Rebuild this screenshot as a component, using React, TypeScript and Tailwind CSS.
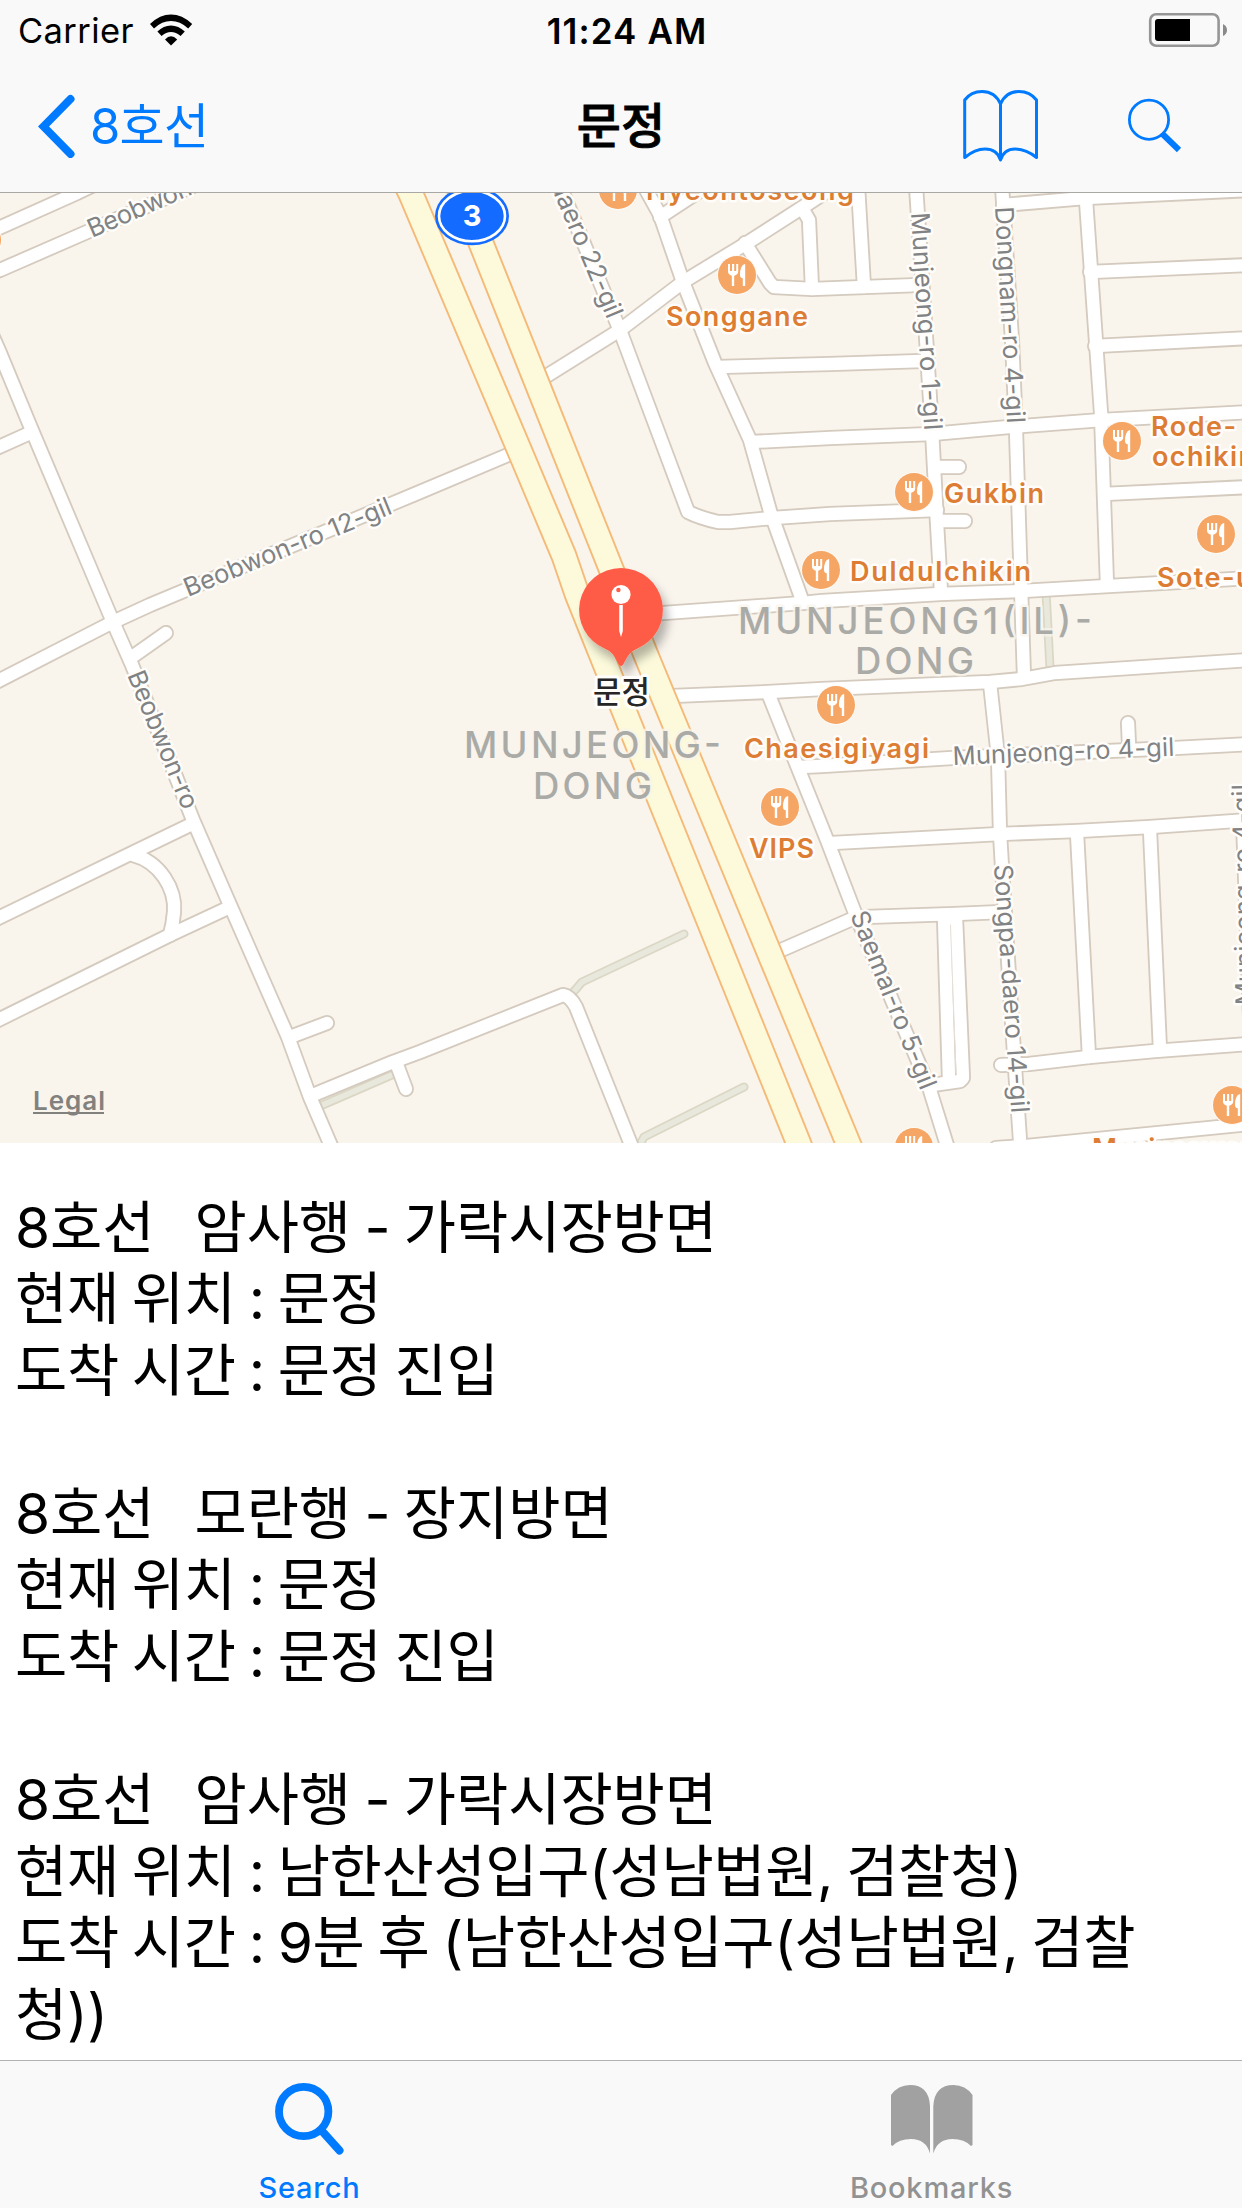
import React from "react";

const SANS = "font-[Inter,'Noto_Sans_CJK_KR',sans-serif]";

const roads: string[] = [
  "M-8 231 L77 193 L100 182",
  "M-8 273 L0 270 L87 232 L200 183",
  "M-8 335 L0 353 L31 428 L113 622 L132 665 L193 820 L230 905 L288 1037 L310 1097 L335 1155",
  "M-8 450 L30 433",
  "M-8 684 L0 680 L113 622 L150 605 L420 492 L515 452",
  "M132 657 L166 633",
  "M-8 921 L130 854 L192 824",
  "M-8 1023 L170 935 L230 907",
  "M133 855 C160 862 176 889 174 912 Q173 924 170 935",
  "M290 1037 L327 1023",
  "M313 1095 L393 1062 L420 1052 L563 995 Q570 996 576 1007 L636 1157",
  "M397 1065 L406 1089",
  "M540 380 L620 330 L683 282 L747 243 L803 207 L835 186",
  "M560 186 L621 333 L688 512 Q700 518 718 522 L730 522 L773 518 L830 514 L937 510",
  "M644 186 L660 215 L683 282 L715 363 L750 440 L770 511 L802 600",
  "M660 217 L704 188",
  "M745 243 L770 283 L774 287 L812 289 L865 287 L919 285",
  "M802 208 L809 220 L812 289",
  "M858 186 L864 287",
  "M916 186 L926 337 L932 430 L937 523 L941 592",
  "M718 367 L830 364 L922 361",
  "M751 442 L830 438 L932 434 L1009 427 L1102 420 L1250 412",
  "M1002 186 L1012 340 L1016 430 L1021 587 L1024 677",
  "M1003 205 L1085 198 L1250 190",
  "M1086 200 L1101 413 L1107 585",
  "M935 467 L959 467",
  "M937 521 L965 521",
  "M1090 272 L1250 265",
  "M1095 346 L1250 338",
  "M1104 494 L1250 487",
  "M650 614 L803 603 L822 601 L940 594 L1022 591 L1109 586 L1250 578",
  "M672 696 L768 692 L822 689 L990 682 L1022 679 L1055 673 L1250 660",
  "M768 693 L798 768 L827 840 L855 913 L929 1087 L950 1155",
  "M800 767 L822 766 L952 758 L1175 748 L1250 744",
  "M1128 723 L1129 745",
  "M990 683 L998 757 L1000 833 L1002 867 L1014 1053 L1021 1155",
  "M832 843 L1000 834 L1077 831 L1150 827 L1250 820",
  "M770 955 L852 919 L865 917 L955 914 L1002 912",
  "M944 918 L949 1080",
  "M956 918 L963 1078 L960 1081 L932 1085",
  "M1077 833 L1089 1057",
  "M1150 830 L1160 1050",
  "M1001 1065 L1029 1064 L1089 1057 L1155 1051 L1250 1044",
  "M996 1148 L1027 1146 L1250 1124",
  "M1243 820 L1251 1045",
];

const paths: string[] = [
  "M318 1107 L394 1074",
  "M570 996 L582 982 L684 934",
  "M638 1148 L644 1137 L744 1087",
  "M1046 592 L1050 668",
];

const highways: string[] = [
  "M407 186 L410.5 193 L518.5 448 L564 556 L577 594 L603.5 660 L798.5 1143 L803 1155",
  "M458 186 L461 193 L611.5 570 L648 660 L848 1143 L853 1155",
];

type RoadLabel = { t: string; x: number; y: number; a: number; len: number };
const roadLabels: RoadLabel[] = [
  { t: "Beobwon-ro 12-gil", x: 188, y: 597, a: -22.2, len: 222 },
  { t: "Beobwon-ro", x: 92, y: 238, a: -23.5, len: 146 },
  { t: "Beobwon-ro", x: 127, y: 675, a: 67.6, len: 147 },
  { t: "Songpa-daero 22-gil", x: 509, y: 88, a: 67, len: 252 },
  { t: "Songpa-daero 14-gil", x: 994, y: 865, a: 86, len: 249 },
  { t: "Saemal-ro 5-gil", x: 850, y: 915, a: 68.1, len: 190 },
  { t: "Munjeong-ro 1-gil", x: 911, y: 213, a: 86.5, len: 218 },
  { t: "Dongnam-ro 4-gil", x: 995, y: 207, a: 86.8, len: 217 },
  { t: "Munjeong-ro 4-gil", x: 953, y: 765, a: -2.4, len: 222 },
  { t: "Munjeong-ro 4-gil", x: 1254, y: 1005, a: -91, len: 221 },
];

type Poi = { t: string; x: number; y: number; len: number };
const poiLabels: Poi[] = [
  { t: "Hyeontoseong", x: 646, y: 199.5, len: 208 },
  { t: "Songgane", x: 666, y: 326, len: 142 },
  { t: "Gukbin", x: 944, y: 502.5, len: 100 },
  { t: "Duldulchikin", x: 850, y: 581, len: 181 },
  { t: "Rode-", x: 1151, y: 436, len: 85 },
  { t: "ochikin", x: 1152, y: 466, len: 103 },
  { t: "Sote-ui", x: 1157, y: 587, len: 104 },
  { t: "Chaesigiyagi", x: 744, y: 758, len: 185 },
  { t: "VIPS", x: 749, y: 858, len: 65 },
  { t: "Musinsawon", x: 1092, y: 1158, len: 165 },
];

const poiIcons: [number, number][] = [
  [-18, 240],
  [618, 190],
  [737, 275],
  [914, 492],
  [821, 570],
  [1122, 441],
  [1216, 534],
  [836, 705],
  [780, 807],
  [1232, 1105],
  [914, 1147],
];

const areaLabels: Poi[] = [
  { t: "MUNJEONG-", x: 464, y: 758, len: 257 },
  { t: "DONG", x: 533, y: 799, len: 119 },
  { t: "MUNJEONG1(IL)-", x: 738, y: 634, len: 354 },
  { t: "DONG", x: 855, y: 674, len: 119 },
];

function FoodIcon({ x, y }: { x: number; y: number }) {
  return (
    <g transform={`translate(${x} ${y})`}>
      <circle r="20" fill="#fdfaf6" />
      <circle r="19" fill="#f5a564" />
      <path
        d="M-9 -11 V-3.5 Q-9 -0.5 -5.2 0.8 V11 H-2.8 V0.8 Q1.2 -0.5 1.2 -3.5 V-11 H-0.8 V-4 H-2.8 V-11 H-5 V-4 H-7 V-11 Z"
        fill="#fff"
      />
      <path d="M8 -11 Q3 -10 3 0 Q3 3 5.8 3.2 V11 H8.2 V-11 Z" fill="#fff" />
    </g>
  );
}

function MapView() {
  return (
    <svg className={`block h-[950px] w-[1242px] ${SANS}`} viewBox="0 193 1242 950">
      <defs>
        <filter id="pinShadow" x="-40%" y="-40%" width="200%" height="200%">
          <feDropShadow dx="5" dy="9" stdDeviation="5" floodColor="#000" floodOpacity="0.28" />
        </filter>
      </defs>
      <rect x="0" y="193" width="1242" height="950" fill="#f9f4ec" />
      <g fill="none" strokeLinejoin="round" strokeLinecap="round">
        <g stroke="#dbd7c5" strokeWidth="9">
          {paths.map((d) => <path key={d} d={d} />)}
        </g>
        <g stroke="#e8e8dc" strokeWidth="5.5">
          {paths.map((d) => <path key={d} d={d} />)}
        </g>
        <g stroke="#d4cabe" strokeWidth="16">
          {roads.map((d) => <path key={d} d={d} />)}
        </g>
        <g stroke="#fff" strokeWidth="12.4">
          {roads.map((d) => <path key={d} d={d} />)}
        </g>
        <path d="M950.5 925 L956 1073" stroke="#e6dfd6" strokeWidth="1" />
        <g stroke="#f5ba78" strokeWidth="26.8">
          {highways.map((d) => <path key={d} d={d} />)}
        </g>
        <g stroke="#fcfadb" strokeWidth="23">
          {highways.map((d) => <path key={d} d={d} />)}
        </g>
      </g>

      <g fontSize="25.5" fill="#808284" stroke="#fffdfa" strokeWidth="5" strokeLinejoin="round" className="[paint-order:stroke]">
        {roadLabels.map((l) => (
          <text key={l.t + l.x} textLength={l.len} transform={`translate(${l.x} ${l.y}) rotate(${l.a})`}>
            {l.t}
          </text>
        ))}
      </g>

      <g>
        <ellipse cx="472" cy="216" rx="37" ry="29.3" fill="#146bff" />
        <ellipse cx="472" cy="216" rx="33" ry="25.3" fill="none" stroke="#fff" strokeWidth="2.6" />
        <text x="472" y="226" textAnchor="middle" fontSize="29" fontWeight="700" fill="#fff">3</text>
      </g>

      <g fontSize="36.5" fontWeight="500" fill="#aaaba7" stroke="#f9f4ec" strokeOpacity="0.75" strokeWidth="5" strokeLinejoin="round" className="[paint-order:stroke]">
        {areaLabels.map((l) => (
          <text key={l.t + l.x} x={l.x} y={l.y} textLength={l.len}>{l.t}</text>
        ))}
      </g>

      {poiIcons.map(([x, y]) => <FoodIcon key={`${x}-${y}`} x={x} y={y} />)}
      <g fontSize="27" fontWeight="600" fill="#dd7d34" stroke="#fffdfa" strokeWidth="5" strokeLinejoin="round" className="[paint-order:stroke]">
        {poiLabels.map((l) => (
          <text key={l.t} x={l.x} y={l.y} textLength={l.len}>{l.t}</text>
        ))}
      </g>

      <g>
        <path
          d="M621 568 A42 42 0 0 1 637 648.8 Q629 652 624.5 662 Q621 670 617.5 662 Q613 652 605 648.8 A42 42 0 0 1 621 568 Z"
          fill="#ff5b47"
          filter="url(#pinShadow)"
        />
        <circle cx="621" cy="594.5" r="9.6" fill="#fff" />
        <circle cx="618.4" cy="590" r="2.2" fill="#ff5b47" />
        <path d="M619.2 605 H622.8 V631 L621 637 L619.2 631 Z" fill="#fff" />
      </g>
      <text x="621.5" y="702.5" textAnchor="middle" fontSize="31" fontWeight="500" fill="#262626" stroke="#fffefb" strokeWidth="6" strokeLinejoin="round" textLength="57" className="[paint-order:stroke]">
        문정
      </text>
      <text x="33" y="1110" fontSize="26" fontWeight="600" fill="#82817e" textLength="72">Legal</text>
      <rect x="33" y="1112" width="71" height="2" fill="#82817e" />
    </svg>
  );
}

function StatusBar() {
  return (
    <div className="flex h-[60px] items-center pt-[3px] text-black">
      <div className="flex w-[414px] items-center pl-[18px]">
        <span className="w-[118px] text-[34.5px] leading-none tracking-[0.4px]">Carrier</span>
        <svg className="mb-[3px] ml-[13px] h-[32px] w-[44px]" viewBox="149 14 44 32">
          <path d="M150 24 Q160 14.6 171 14.6 Q182 14.6 192.2 24 L188.2 28.4 Q180 21 171 21 Q162 21 154 28.4 Z" />
          <path d="M157.4 31.6 Q163.5 25.6 171 25.6 Q178.5 25.6 184.8 31.6 L180.6 36 Q176 32 171 32 Q166 32 161.6 36 Z" />
          <path d="M165 39.5 Q168 36.2 171 36.2 Q174 36.2 177.2 39.5 L171 45.5 Z" />
        </svg>
      </div>
      <div className="w-[426px] text-center text-[35px] font-semibold leading-none tracking-[1.1px]">11:24 AM</div>
      <div className="flex flex-1 justify-end pb-[3px] pr-[14px]">
        <svg className="h-[36px] w-[80px]" viewBox="1148 12 80 36">
          <rect x="1150.2" y="14.2" width="68.4" height="31.6" rx="6" fill="none" stroke="#969696" strokeWidth="2.6" />
          <path d="M1158 19 H1190 V41 H1158 Q1155 41 1155 38 V22 Q1155 19 1158 19 Z" />
          <path d="M1223 24 Q1227 26 1227 30 Q1227 34 1223 36 Z" fill="#8a8a8a" />
        </svg>
      </div>
    </div>
  );
}

function NavBar() {
  return (
    <div className="flex h-[132px] items-center">
      <div className="flex w-[414px] items-center pl-[38px] text-[#007aff]">
        <svg className="h-[64px] w-[38px]" viewBox="38 94 38 64" fill="none" stroke="#007aff" strokeWidth="8" strokeLinecap="round">
          <path d="M70.5 99 L43.5 126.5 L70.5 154" strokeLinejoin="miter" />
        </svg>
        <span className="ml-[14px] text-[49px] leading-none tracking-[-0.7px]">8호선</span>
      </div>
      <div className="w-[414px] text-center text-[48px] font-medium leading-none text-black [-webkit-text-stroke:0.8px_#000]">문정</div>
      <div className="flex flex-1 items-center justify-end pb-[1px] pr-[60px]">
        <svg className="h-[76px] w-[80px]" viewBox="960 87 80 76" fill="none" stroke="#007aff" strokeWidth="3" strokeLinejoin="round">
          <path d="M1000.5 159 V103 Q995 90.5 982 90.5 Q971 90.5 964.7 99 V156.5 Q975 148 985 148 Q997 148 1000.5 159 Q1004 148 1015 148 Q1026 148 1036.5 156.5 V99 Q1030 90.5 1019 90.5 Q1006 90.5 1000.5 103" />
        </svg>
        <svg className="ml-[85px] h-[76px] w-[57px]" viewBox="1125 87 57 76" fill="none" stroke="#007aff">
          <circle cx="1149" cy="118.7" r="19.6" strokeWidth="2.8" />
          <path d="M1162.5 133 L1179 149" strokeWidth="6" />
        </svg>
      </div>
    </div>
  );
}

type Arrival = { heading: string; details: string[] };
const arrivals: Arrival[] = [
  { heading: "8호선   암사행 - 가락시장방면", details: ["현재 위치 : 문정", "도착 시간 : 문정 진입"] },
  { heading: "8호선   모란행 - 장지방면", details: ["현재 위치 : 문정", "도착 시간 : 문정 진입"] },
  {
    heading: "8호선   암사행 - 가락시장방면",
    details: [
      "현재 위치 : 남한산성입구(성남법원, 검찰청)",
      "도착 시간 : 9분 후 (남한산성입구(성남법원, 검찰",
      "청))",
    ],
  },
];

function TabBar() {
  return (
    <nav className="flex h-[148px] border-t border-[#b2b2b2] bg-[#f9f9f9]">
      <div className="flex flex-1 flex-col items-center pt-[21px] text-[#007aff]">
        <svg className="mr-[1px] h-[76px] w-[76px]" viewBox="272 2082 76 76" fill="none" stroke="#007aff" strokeLinecap="round">
          <circle cx="303.7" cy="2111.5" r="24.7" strokeWidth="7.8" />
          <path d="M322 2131 L339.5 2150.5" strokeWidth="8" />
        </svg>
        <span className="mr-[2px] mt-[15px] text-[29px] font-medium leading-none tracking-[0.8px]">Search</span>
      </div>
      <div className="flex flex-1 flex-col items-center pt-[21px] text-[#929292]">
        <svg className="h-[76px] w-[84px]" viewBox="890 2082 84 76" fill="#a1a1a1">
          <path d="M891 2095 Q898 2085 910 2085 Q929 2085 930 2106 V2153.5 Q926 2139 911 2139 Q899 2139 892.5 2146 L891 2145 Z" />
          <path d="M972.5 2095 Q965.5 2085 953.5 2085 Q934.5 2085 933.3 2106 V2153.5 Q937.5 2139 952.5 2139 Q964.5 2139 971 2146 L972.5 2145 Z" />
        </svg>
        <span className="mt-[15px] text-[29px] font-medium leading-none tracking-[0.8px]">Bookmarks</span>
      </div>
    </nav>
  );
}

export default function App() {
  return (
    <div className={`flex h-[2208px] w-[1242px] flex-col overflow-hidden bg-white ${SANS}`}>
      <header className="h-[193px] border-b border-[#aaa8a5] bg-[#f9f9f9]">
        <StatusBar />
        <NavBar />
      </header>
      <MapView />
      <main className="flex flex-1 flex-col gap-[71.6px] pl-[15px] pt-[48.5px] text-[56.8px] leading-[71.6px] tracking-[-0.35px] text-black [word-spacing:-2.6px]">
        {arrivals.map((a, i) => (
          <div key={i}>
            <p className="whitespace-pre tracking-[-0.05px]">{a.heading}</p>
            {a.details.map((line) => (
              <p key={line} className="whitespace-pre">{line}</p>
            ))}
          </div>
        ))}
      </main>
      <TabBar />
    </div>
  );
}
